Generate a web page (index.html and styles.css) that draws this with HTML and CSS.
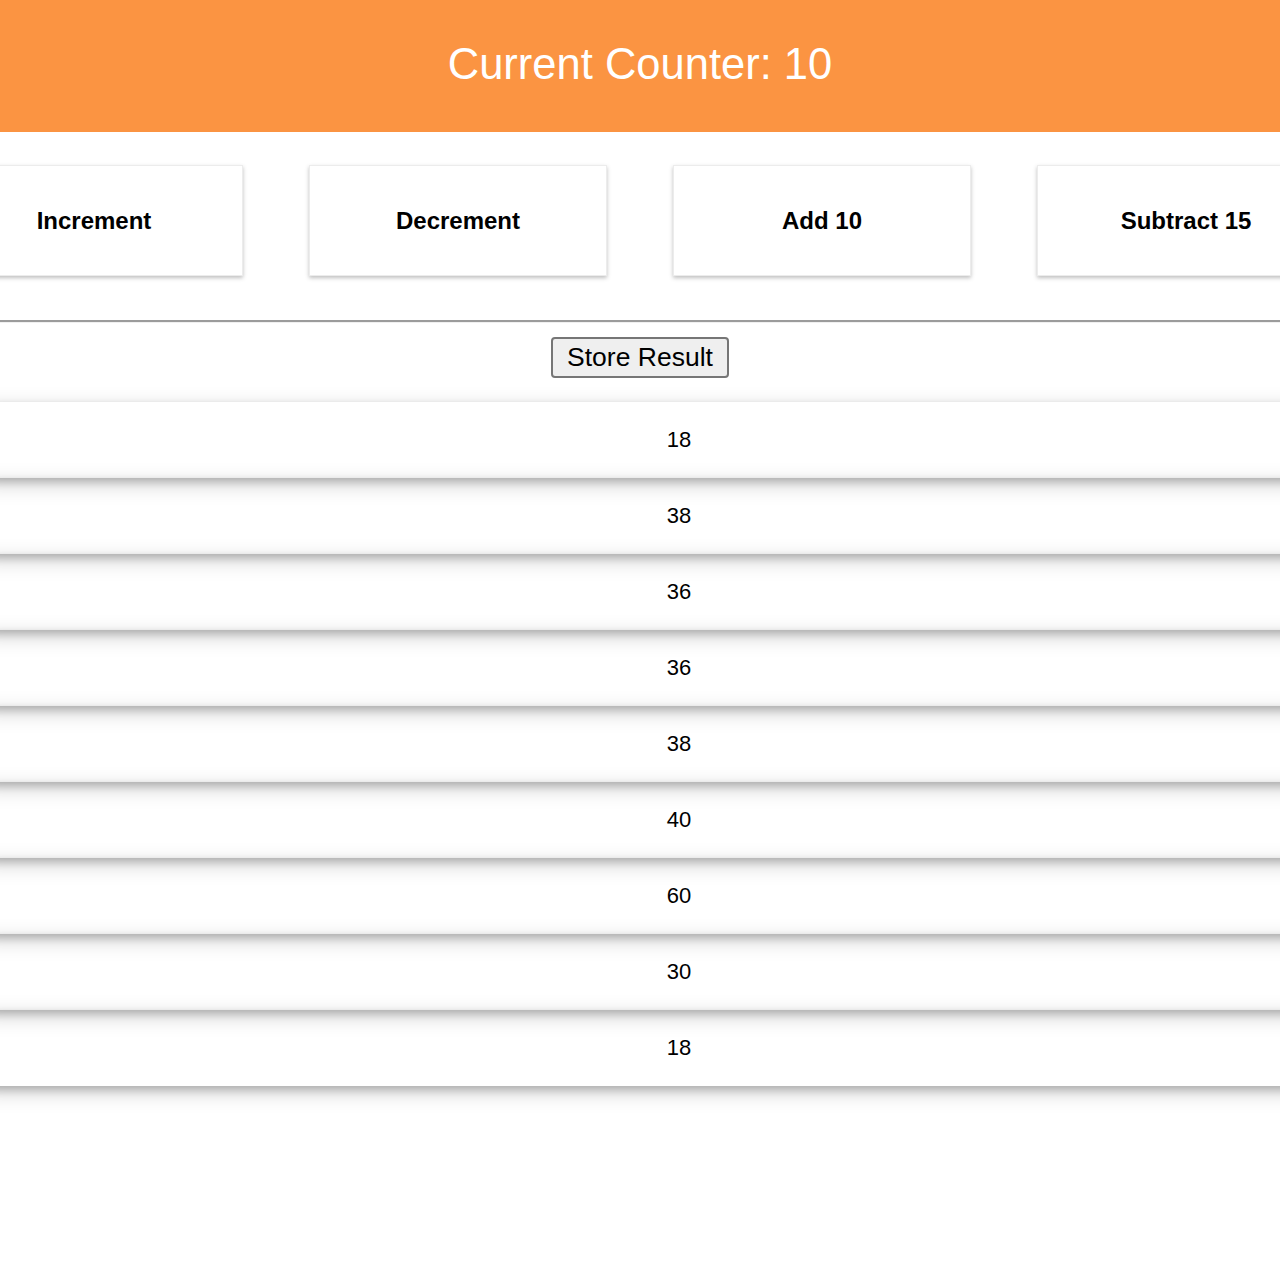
FILE: index.html
```html
<!DOCTYPE html>
<html>
<head>
<meta charset="utf-8">
<link rel="stylesheet" href="styles.css">
</head>
<body>
<div class="page">
  <header class="header">Current Counter: 10</header>
  <div class="actions">
    <div class="card">Increment</div>
    <div class="card">Decrement</div>
    <div class="card">Add 10</div>
    <div class="card">Subtract 15</div>
  </div>
  <hr class="rule">
  <div class="store"><button class="store-btn">Store Result</button></div>
  <ul class="results">
    <li>18</li>
    <li>38</li>
    <li>36</li>
    <li>36</li>
    <li>38</li>
    <li>40</li>
    <li>60</li>
    <li>30</li>
    <li>18</li>
  </ul>
</div>
</body>
</html>
```

FILE: styles.css
```css
html, body {
  margin: 0;
  padding: 0;
  background: #fff;
  overflow-x: hidden;
}
body {
  font-family: "Liberation Sans", Arial, sans-serif;
  color: #000;
}
.page {
  width: 1280px;
  overflow: hidden;
  padding-bottom: 60px;
}
.header {
  box-sizing: border-box;
  height: 132px;
  padding-bottom: 4px;
  background: #fb9442;
  color: #fff;
  font-size: 43.5px;
  display: flex;
  align-items: center;
  justify-content: center;
}
.actions {
  display: flex;
  justify-content: center;
  gap: 66px;
  margin-top: 33px;
}
.card {
  flex-shrink: 0;
  box-sizing: border-box;
  width: 298px;
  height: 111px;
  border: 1px solid #ececec;
  box-shadow: 0 2px 4px rgba(0, 0, 0, 0.25);
  display: flex;
  align-items: center;
  justify-content: center;
  font-weight: bold;
  font-size: 24px;
}
.rule {
  margin: 44px 0 0;
  height: 0;
  border: 0;
  border-top: 2px solid #9b9b9b;
  border-bottom: 1px solid #f0f0f0;
}
.store {
  display: flex;
  justify-content: center;
  margin-top: 14px;
}
.store-btn {
  font-family: "Liberation Sans", Arial, sans-serif;
  font-size: 26.5px;
  height: 41px;
  padding: 0 14px;
  background: #efefef;
  border: 2px solid #767676;
  border-radius: 4px;
  color: #000;
}
.results {
  list-style: none;
  margin: 24px -98px 0 -20px;
  padding: 0;
}
.results li {
  height: 76px;
  display: flex;
  align-items: center;
  justify-content: center;
  font-size: 22px;
  box-shadow: 0 4px 8px rgba(0, 0, 0, 0.2), 0 6px 20px rgba(0, 0, 0, 0.19);
}
```
